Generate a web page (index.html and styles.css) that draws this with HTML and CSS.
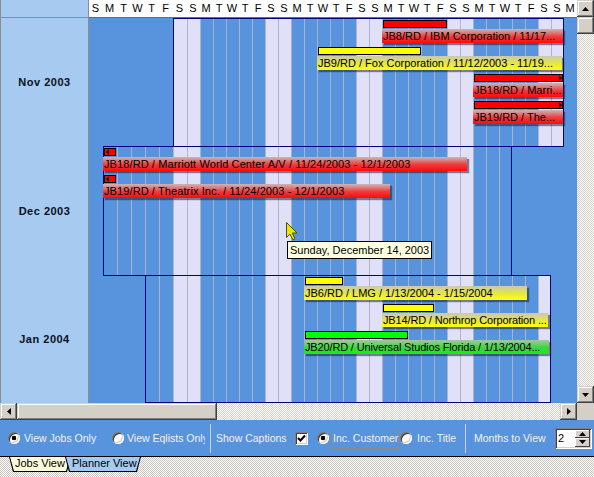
FILE: index.html
```html
<!DOCTYPE html>
<html>
<head>
<meta charset="utf-8">
<link rel="stylesheet" href="styles.css">
</head>
<body>
<div class="app">
  <div class="top">
    <div class="cal">
      <div class="corner"></div>
      <div class="hdr">
        <span>S</span><span>M</span><span>T</span><span>W</span><span>T</span><span>F</span><span>S</span>
        <span>S</span><span>M</span><span>T</span><span>W</span><span>T</span><span>F</span><span>S</span>
        <span>S</span><span>M</span><span>T</span><span>W</span><span>T</span><span>F</span><span>S</span>
        <span>S</span><span>M</span><span>T</span><span>W</span><span>T</span><span>F</span><span>S</span>
        <span>S</span><span>M</span><span>T</span><span>W</span><span>T</span><span>F</span><span>S</span>
        <span>S</span><span>M</span>
      </div>

      <div class="mon">Nov 2003</div>
      <div class="band">
        <div class="days">
          <i class="o s6"></i>
          <i class="we"></i><i class="we"></i>
          <i class="wd"></i><i class="wd"></i><i class="wd"></i><i class="wd"></i><i class="wd"></i>
          <i class="we"></i><i class="we"></i>
          <i class="wd"></i><i class="wd"></i><i class="wd"></i><i class="wd"></i><i class="wd"></i>
          <i class="we"></i><i class="we"></i>
          <i class="wd"></i><i class="wd"></i><i class="wd"></i><i class="wd"></i><i class="wd"></i>
          <i class="we"></i><i class="we"></i>
          <i class="wd"></i><i class="wd"></i><i class="wd"></i><i class="wd"></i><i class="wd"></i>
          <i class="we"></i><i class="we"></i>
          <i class="o s1"></i>
        </div>
        <div class="mbox" style="grid-column:7 / 37"></div>
        <div class="ev row1" style="grid-column:23">
          <div class="bar red" style="width:64px"></div>
          <div class="lab red" style="width:181px">JB8/RD / IBM Corporation / 11/17...</div>
        </div>
        <div class="ev row2" style="grid-column:18">
          <div class="bar yel" style="width:103px"></div>
          <div class="lab yel" style="width:245px">JB9/RD / Fox Corporation / 11/12/2003 - 11/19...</div>
        </div>
        <div class="ev row3" style="grid-column:30">
          <div class="bar red ra" style="width:89px"></div>
          <div class="lab red" style="width:90px">JB18/RD / Marri...</div>
        </div>
        <div class="ev row4" style="grid-column:30">
          <div class="bar red ra" style="width:89px"></div>
          <div class="lab red" style="width:90px">JB19/RD / The...</div>
        </div>
      </div>

      <div class="mon">Dec 2003</div>
      <div class="band">
        <div class="days">
          <i class="o s1"></i>
          <i class="wd"></i><i class="wd"></i><i class="wd"></i><i class="wd"></i><i class="wd"></i>
          <i class="we"></i><i class="we"></i>
          <i class="wd"></i><i class="wd"></i><i class="wd"></i><i class="wd"></i><i class="wd"></i>
          <i class="we"></i><i class="we"></i>
          <i class="wd"></i><i class="wd"></i><i class="wd"></i><i class="wd"></i><i class="wd"></i>
          <i class="we"></i><i class="we"></i>
          <i class="wd"></i><i class="wd"></i><i class="wd"></i><i class="wd"></i><i class="wd"></i>
          <i class="we"></i><i class="we"></i>
          <i class="wd"></i><i class="wd"></i><i class="wd"></i>
          <i class="o s5"></i>
        </div>
        <div class="mbox" style="grid-column:2 / 33"></div>
        <div class="ev row1" style="grid-column:2">
          <div class="bar red la" style="width:12px"></div>
          <div class="lab red wide" style="width:364px">JB18/RD / Marriott World Center A/V / 11/24/2003 - 12/1/2003</div>
        </div>
        <div class="ev row2" style="grid-column:2">
          <div class="bar red la" style="width:12px"></div>
          <div class="lab red wide" style="width:287px">JB19/RD / Theatrix Inc. / 11/24/2003 - 12/1/2003</div>
        </div>
      </div>

      <div class="mon">Jan 2004</div>
      <div class="band">
        <div class="days">
          <i class="o s4"></i>
          <i class="wd"></i><i class="wd"></i>
          <i class="we"></i><i class="we"></i>
          <i class="wd"></i><i class="wd"></i><i class="wd"></i><i class="wd"></i><i class="wd"></i>
          <i class="we"></i><i class="we"></i>
          <i class="wd"></i><i class="wd"></i><i class="wd"></i><i class="wd"></i><i class="wd"></i>
          <i class="we"></i><i class="we"></i>
          <i class="wd"></i><i class="wd"></i><i class="wd"></i><i class="wd"></i><i class="wd"></i>
          <i class="we"></i><i class="we"></i>
          <i class="wd"></i><i class="wd"></i><i class="wd"></i><i class="wd"></i><i class="wd"></i>
          <i class="we"></i>
          <i class="o s2"></i>
        </div>
        <div class="mbox last" style="grid-column:5 / 36"></div>
        <div class="ev row1" style="grid-column:17">
          <div class="bar yel" style="width:38px"></div>
          <div class="lab yel" style="width:223px">JB6/RD / LMG / 1/13/2004 - 1/15/2004</div>
        </div>
        <div class="ev row2" style="grid-column:23">
          <div class="bar yel" style="width:51px"></div>
          <div class="lab yel tight" style="width:166px">JB14/RD / Northrop Corporation ...</div>
        </div>
        <div class="ev row3" style="grid-column:17">
          <div class="bar grn" style="width:103px"></div>
          <div class="lab grn tight" style="width:245px">JB20/RD / Universal Studios Florida / 1/13/2004...</div>
        </div>
      </div>
    </div>

    <div class="vs">
      <div class="sbtn"><svg width="7" height="4" viewBox="0 0 7 4"><polygon points="3.5,0 7,4 0,4" fill="#000"/></svg></div>
      <div class="thumb vt"></div>
      <div class="track"></div>
      <div class="sbtn"><svg width="7" height="4" viewBox="0 0 7 4"><polygon points="0,0 7,0 3.5,4" fill="#000"/></svg></div>
    </div>
  </div>

  <div class="hs">
    <div class="sbtn"><svg width="4" height="7" viewBox="0 0 4 7"><polygon points="0,3.5 4,0 4,7" fill="#000"/></svg></div>
    <div class="thumb ht"></div>
    <div class="track"></div>
    <div class="sbtn"><svg width="4" height="7" viewBox="0 0 4 7"><polygon points="0,0 4,3.5 0,7" fill="#000"/></svg></div>
    <div class="sq"></div>
  </div>

  <div class="tb">
    <span class="rb on"></span>
    <span class="tl t1">View Jobs Only</span>
    <span class="rb"></span>
    <span class="tl t2">View Eqlists Only</span>
    <span class="sep"></span>
    <span class="tl t3">Show Captions</span>
    <span class="cb"><svg width="9" height="9" viewBox="0 0 9 9"><polyline points="1,4 3.5,6.5 8,1.5" fill="none" stroke="#000" stroke-width="2"/></svg></span>
    <span class="rb on rb-cust"></span>
    <span class="tl focus">Inc. Customer</span>
    <span class="rb"></span>
    <span class="tl t5">Inc. Title</span>
    <span class="sep"></span>
    <span class="tl t6">Months to View</span>
    <span class="spin">
      <span class="val">2</span>
      <span class="spb">
        <i><svg width="7" height="4" viewBox="0 0 7 4"><polygon points="3.5,0 7,4 0,4" fill="#000"/></svg></i>
        <i><svg width="7" height="4" viewBox="0 0 7 4"><polygon points="0,0 7,0 3.5,4" fill="#000"/></svg></i>
      </span>
    </span>
  </div>

  <div class="tabs">
    <div class="tab act"><span>Jobs View</span></div>
    <div class="tab pl"><span>Planner View</span></div>
  </div>

  <div class="tip">Sunday, December 14, 2003</div>
  <svg class="cur" width="12" height="19" viewBox="0 0 12 19"><path d="M0.5 0.5 L0.5 15.5 L4 12 L6.8 17.8 L9 16.8 L6.3 11 L11 11 Z" fill="#e8e800" stroke="#505000" stroke-width="1"/></svg>
</div>
</body>
</html>
```

FILE: styles.css
```css
* { box-sizing: border-box; }
body { margin: 0; }

.app {
  position: relative;
  width: 594px;
  height: 477px;
  overflow: hidden;
  font-family: "Liberation Sans", Arial, sans-serif;
  font-size: 11px;
  background: #d4d0c8;
}

.top { display: flex; height: 403px; }

.cal {
  width: 577px;
  display: grid;
  grid-template-columns: 89px 488px;
  grid-template-rows: 18px 128px 129px 128px;
}

.corner {
  background: #a6caf0;
  border-left: 1px solid #8c8c8c;
  border-right: 1px solid #8c8c8c;
  border-bottom: 1px solid #8c8c8c;
}

.hdr {
  display: grid;
  grid-template-columns: repeat(7, 14px) repeat(30, 13px);
  background: #fff;
  border-bottom: 1px solid #6c6c6c;
  overflow: hidden;
}
.hdr span {
  text-align: center;
  line-height: 17px;
  padding-right: 1px;
  color: #000;
}

.mon {
  background: #a6caf0;
  border-left: 1px solid #8c8c8c;
  border-right: 1px solid #8c8c8c;
  display: flex;
  align-items: center;
  justify-content: center;
  font-weight: bold;
  letter-spacing: 0.5px;
  color: #0a1020;
}

.band {
  display: grid;
  grid-template-columns: repeat(7, 14px) repeat(30, 13px);
  grid-template-rows: 2px repeat(4, 27px) 1fr;
}

.days {
  grid-column: 1 / -1;
  grid-row: 1 / -1;
  display: grid;
  grid-template-columns: repeat(7, 14px) repeat(30, 13px);
}
.days i { display: block; }
.days .o { background: #5893dd; }
.days .wd { background: #5893dd; border-left: 1px solid #a9b3cc; }
.days .we { background: #e0e0f8; border-left: 1px solid #b4b4c8; }
.s1 { grid-column: span 1; }
.s2 { grid-column: span 2; }
.s4 { grid-column: span 4; }
.s5 { grid-column: span 5; }
.s6 { grid-column: span 6; }

.mbox {
  grid-row: 1 / -1;
  border: 1px solid #000080;
  margin-bottom: -1px;
  position: relative;
  z-index: 1;
}
.mbox.last { margin-bottom: 0; }

.ev {
  position: relative;
  z-index: 2;
  display: flex;
  flex-direction: column;
  align-items: flex-start;
}
.row1 { grid-row: 2; }
.row2 { grid-row: 3; }
.row3 { grid-row: 4; }
.row4 { grid-row: 5; }

.bar {
  height: 8px;
  margin-left: 1px;
  border: 1px solid #000;
  flex: none;
}
.bar.red { background: #ff0000; }
.bar.yel { background: #ffff00; }
.bar.grn { background: #00ff00; }
.bar.ra, .bar.la { display: flex; align-items: center; }
.bar.ra::after {
  content: "";
  margin-left: auto;
  border-left: 3px solid #000;
  border-top: 3px solid transparent;
  border-bottom: 3px solid transparent;
}
.bar.la::before {
  content: "";
  margin-left: 1px;
  border-right: 3px solid #000;
  border-top: 3px solid transparent;
  border-bottom: 3px solid transparent;
}

.lab {
  flex: none;
  margin-top: 1px;
  height: 14px;
  line-height: 14px;
  padding-left: 1px;
  white-space: nowrap;
  overflow: hidden;
  color: #000;
  box-shadow: 2px 2px 1px rgba(20, 20, 40, 0.5);
}
.lab.wide { letter-spacing: 0.1px; }
.lab.tight { letter-spacing: -0.15px; }
.lab.red { background: linear-gradient(#cbb6b6, #ee3a3a 55%, #ff0a0a); }
.lab.yel { background: linear-gradient(#c9c9b4, #e8e83a 55%, #ffff10); }
.lab.grn { background: linear-gradient(#a8c4a8, #3ad83a 55%, #10f010); }

/* scrollbars */
.sbtn, .thumb {
  background: #d4d0c8;
  box-shadow: inset -1px -1px #404040, inset 1px 1px #d4d0c8, inset -2px -2px #808080, inset 2px 2px #fff;
}
.sbtn {
  width: 17px;
  height: 17px;
  flex: none;
  display: flex;
  align-items: center;
  justify-content: center;
}
.track {
  flex: 1;
  background: repeating-conic-gradient(#d4d0c8 0 25%, #ffffff 0 50%) 0 0 / 2px 2px;
}
.vs { width: 17px; display: flex; flex-direction: column; }
.vt { height: 17px; flex: none; }
.hs { height: 17px; display: flex; }
.ht { width: 200px; flex: none; }
.sq { width: 17px; background: #d4d0c8; }

/* toolbar */
.tb {
  height: 36px;
  background: #5893dd;
  display: flex;
  align-items: center;
  padding-left: 8px;
  color: #f2f2f2;
  font-size: 10.5px;
}
.rb {
  width: 12px;
  height: 12px;
  flex: none;
  border-radius: 50%;
  background: #fff;
  box-shadow: inset 1px 1px #808080, inset -1px -1px #ffffff, inset 2px 2px #404040, inset -2px -2px #d4d0c8;
}
.rb.on { background: radial-gradient(circle, #000 0 2px, #fff 2.6px); }
.tl { white-space: nowrap; flex: none; }
.t1 { margin-left: 4px; width: 88px; }
.t2 { margin-left: 3px; width: 78px; margin-right: 2px; overflow: hidden; }
.sep { width: 1px; height: 29px; margin-left: 3px; background: #c4d4ec; flex: none; }
.t3 { margin-left: 5px; width: 79px; }
.cb {
  width: 13px;
  height: 13px;
  flex: none;
  background: #fff;
  display: flex;
  align-items: center;
  justify-content: center;
  box-shadow: inset 1px 1px #808080, inset -1px -1px #ffffff, inset 2px 2px #404040, inset -2px -2px #d4d0c8;
}
.rb-cust { margin-left: 9px; }
.focus {
  margin-left: 1px;
  width: 70px;
  height: 22px;
  border: 1px solid #8a8a8a;
  padding-left: 2px;
  display: flex;
  align-items: center;
}
.t5 { margin-left: 5px; width: 45px; }
.t6 { margin-left: 8px; width: 81px; }
.spin {
  width: 37px;
  height: 21px;
  flex: none;
  padding: 2px;
  display: flex;
  background: #fff;
  color: #000;
  font-size: 11px;
  box-shadow: inset 1px 1px #808080, inset -1px -1px #ffffff, inset 2px 2px #404040, inset -2px -2px #d4d0c8;
}
.spin .val { flex: 1; line-height: 16px; padding-left: 1px; }
.spb { width: 15px; display: flex; flex-direction: column; }
.spb i {
  flex: 1;
  display: flex;
  align-items: center;
  justify-content: center;
  background: #d4d0c8;
  box-shadow: inset -1px -1px #404040, inset 1px 1px #fff;
}

/* tabs */
.tabs {
  height: 21px;
  border-top: 1px solid #000;
  background: repeating-conic-gradient(#c8c4bc 0 25%, #ffffff 0 50%) 0 0 / 2px 2px;
  display: flex;
  align-items: flex-start;
  padding-left: 9px;
}
.tab {
  height: 15px;
  padding: 0 1px 1px;
  background: #000;
  clip-path: polygon(0 0, 100% 0, calc(100% - 4px) 100%, 4px 100%);
  flex: none;
}
.tab span {
  display: block;
  height: 14px;
  line-height: 13px;
  color: #000;
  white-space: nowrap;
  clip-path: polygon(0 0, 100% 0, calc(100% - 4px) 100%, 4px 100%);
}
.tab.act { width: 62px; }
.tab.act span { background: #fcfcdc; padding-left: 5px; }
.tab.pl { width: 76px; margin-left: -6px; }
.tab.pl span { background: #a6caf0; padding-left: 6px; }

/* overlays */
.tip {
  position: absolute;
  left: 287px;
  top: 241px;
  height: 18px;
  padding: 0 2px;
  border: 1px solid #000;
  background: #ffffe1;
  line-height: 16px;
  white-space: nowrap;
  color: #000;
  z-index: 5;
}
.cur {
  position: absolute;
  left: 286px;
  top: 222px;
  z-index: 6;
}
```
